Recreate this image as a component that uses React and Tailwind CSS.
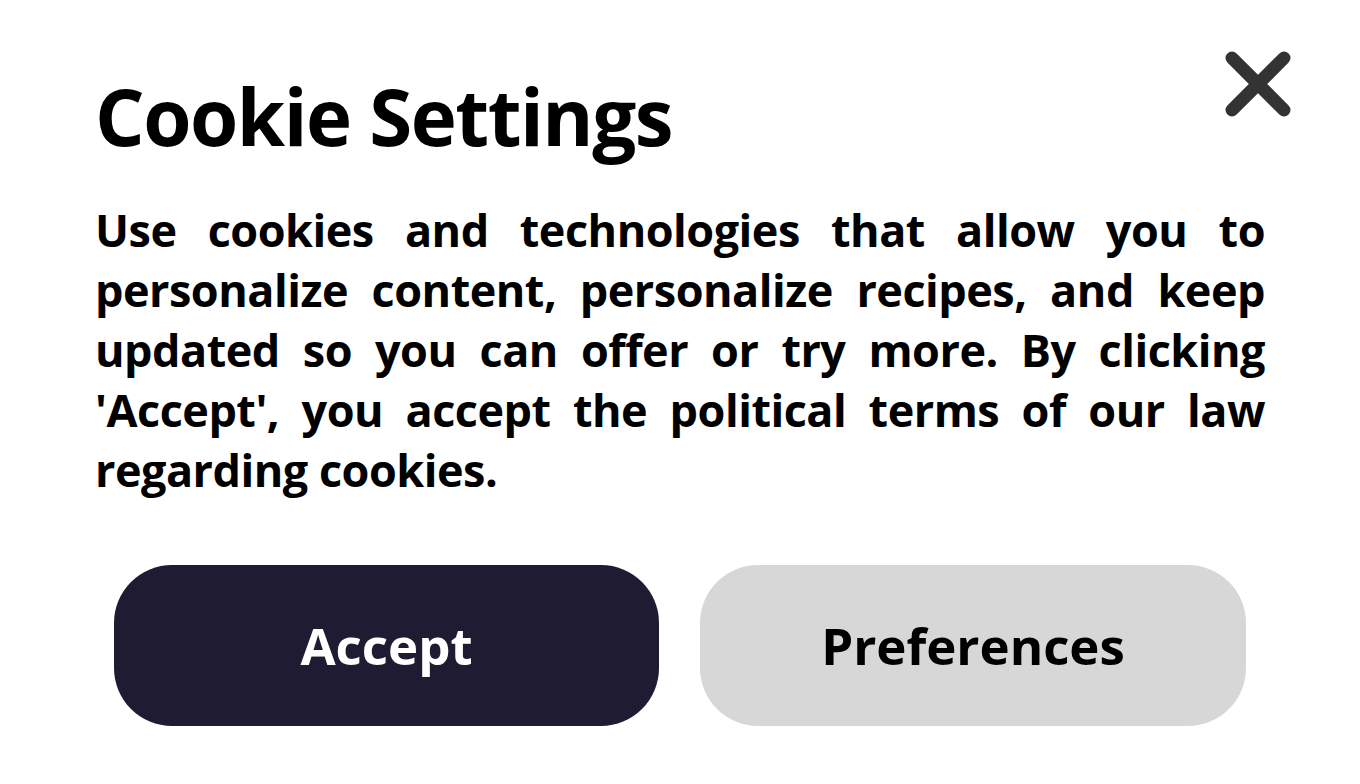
export default function App() {
  return (
    <div className="w-[1360px] h-[784px] bg-white overflow-hidden relative" style={{ fontFamily: '"Open Sans", "Noto Sans", sans-serif' }}>
      <button className="absolute left-[1222px] top-[48px] w-[72px] h-[72px] flex items-center justify-center" aria-label="Close">
        <svg width="72" height="72" viewBox="0 0 72 72">
          <path d="M10 10 L62 62 M62 10 L10 62" stroke="#333333" strokeWidth="13" strokeLinecap="round" fill="none" />
        </svg>
      </button>
      <div className="pl-[95px] pt-[77px] w-[1265px]">
        <h1 className="text-[78px] leading-[78px] font-bold text-black tracking-[-1.5px]">Cookie Settings</h1>
        <p className="mt-[45px] text-[45px] leading-[60px] font-bold text-black text-justify tracking-[-0.5px]">
          Use cookies and technologies that allow you to personalize content, personalize recipes, and keep updated so you can offer or try more. By clicking 'Accept', you accept the political terms of our law regarding cookies.
        </p>
      </div>
      <div className="flex gap-[41px] pl-[114px] mt-[65px]">
        <button className="w-[545px] h-[161px] rounded-[58px] bg-[#1f1b33] text-white text-[51px] font-bold">Accept</button>
        <button className="w-[546px] h-[161px] rounded-[58px] bg-[#d7d7d7] text-black text-[51px] font-bold">Preferences</button>
      </div>
    </div>
  );
}
